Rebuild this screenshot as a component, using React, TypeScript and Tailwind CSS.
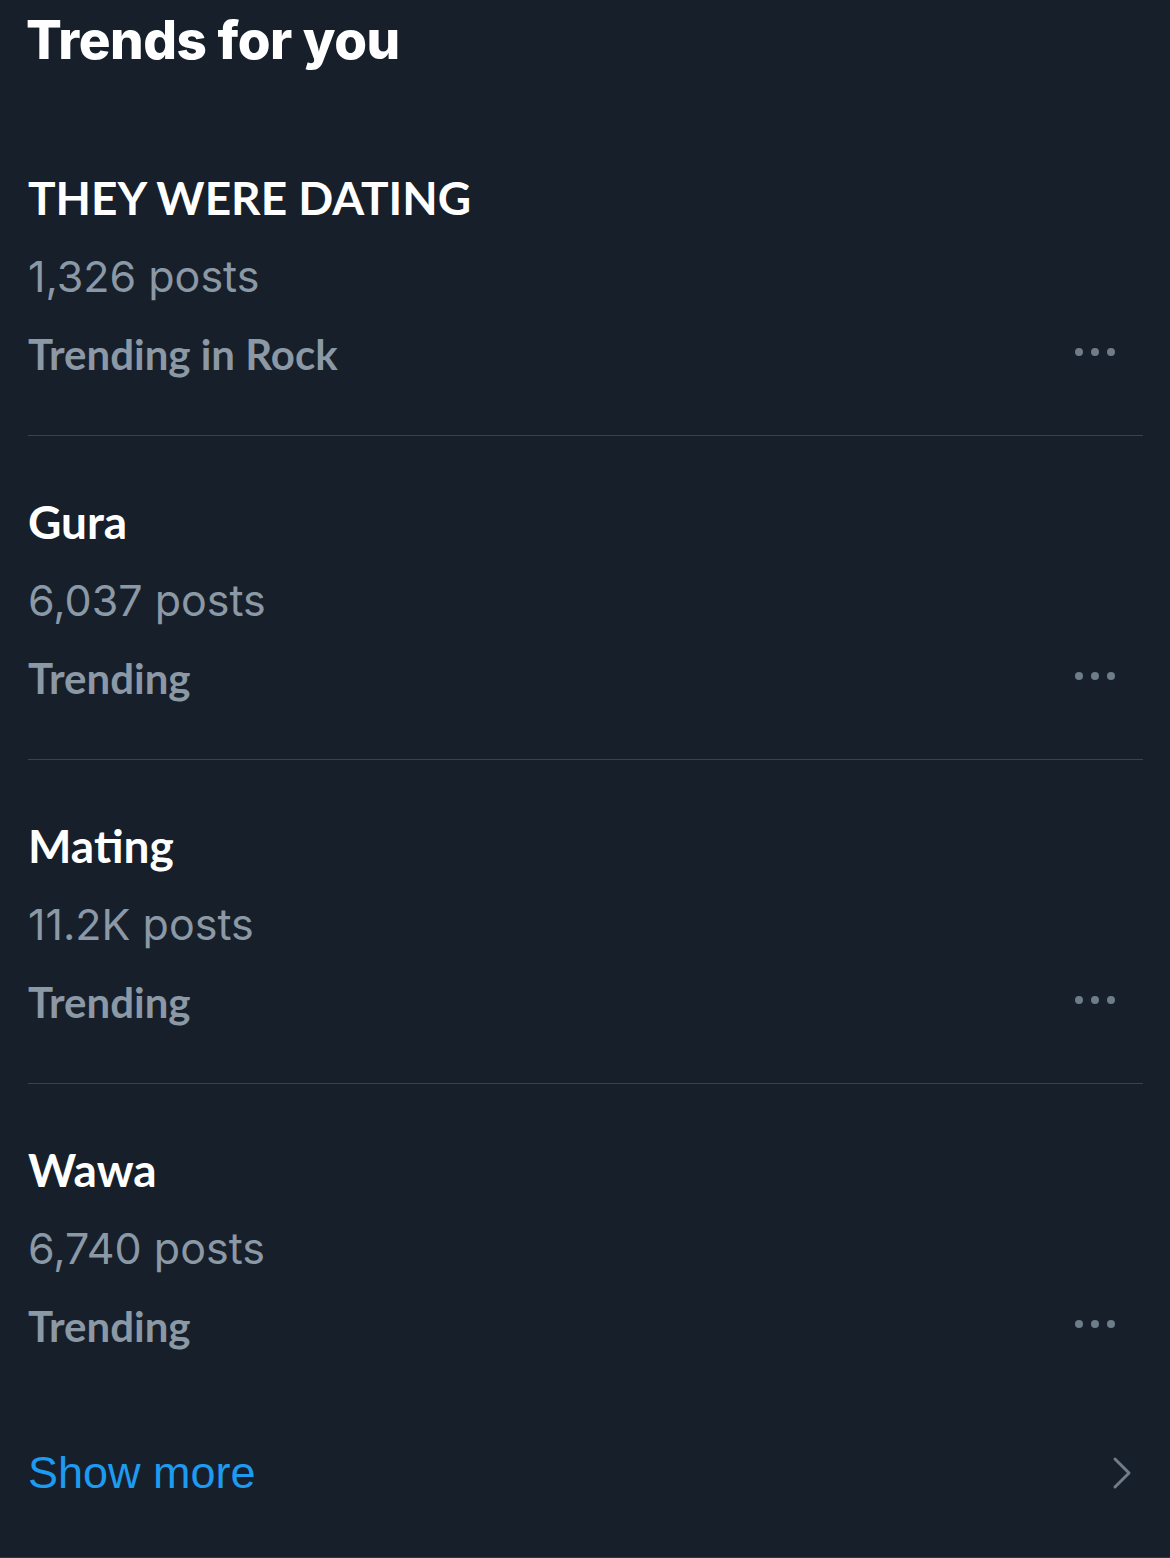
const trends = [
  { name: "THEY WERE DATING", posts: "1,326 posts", context: "Trending in Rock" },
  { name: "Gura", posts: "6,037 posts", context: "Trending" },
  { name: "Mating", posts: "11.2K posts", context: "Trending" },
  { name: "Wawa", posts: "6,740 posts", context: "Trending" },
];

const lato = { fontFamily: '"Lato", "Noto Sans", sans-serif' };
const inter = { fontFamily: '"Inter", "Noto Sans", sans-serif' };

function MoreDots() {
  return (
    <div className="mr-[28px] flex items-center gap-[7.5px] pb-[4px]">
      <span className="h-[8.5px] w-[8.5px] rounded-full bg-[#6f7c89]" />
      <span className="h-[8.5px] w-[8.5px] rounded-full bg-[#6f7c89]" />
      <span className="h-[8.5px] w-[8.5px] rounded-full bg-[#6f7c89]" />
    </div>
  );
}

function TrendRow({
  name,
  posts,
  context,
  last,
}: {
  name: string;
  posts: string;
  context: string;
  last: boolean;
}) {
  return (
    <div className={last ? "pt-[60px]" : "border-b border-[#38444d] pt-[60px] pb-[56px]"}>
      <div className="text-[46px] font-bold leading-[52px] text-white" style={lato}>
        {name}
      </div>
      <div className="mt-[26px] text-[43px] font-normal leading-[52px] text-[#8b98a5]" style={inter}>
        {posts}
      </div>
      <div className="mt-[27px] flex items-center justify-between">
        <span className="text-[42px] font-bold leading-[50px] text-[#8b98a5]" style={lato}>
          {context}
        </span>
        <MoreDots />
      </div>
    </div>
  );
}

export default function App() {
  return (
    <div className="min-h-[1558px] w-[1170px] border-b border-[#2f3a44] bg-[#171f2a] pl-[28px] pr-[27px]">
      <h1
        className="-ml-[2px] pt-[8px] text-[53px] font-extrabold leading-[64px] tracking-[-0.5px] text-white"
        style={inter}
      >
        Trends for you
      </h1>
      <div className="mt-[40px]">
        {trends.map((t, i) => (
          <TrendRow key={t.name} {...t} last={i === trends.length - 1} />
        ))}
      </div>
      <div className="mt-[96px] flex items-center justify-between">
        <span
          className="text-[45px] leading-[52px] text-[#1d9bf0]"
          style={{ fontFamily: '"Liberation Sans", Arial, sans-serif' }}
        >
          Show more
        </span>
        <svg
          width="22"
          height="34"
          viewBox="0 0 22 34"
          fill="none"
          className="mr-[9px]"
        >
          <path d="M3 3 L17 17 L3 31" stroke="#6f7c89" strokeWidth="3" strokeLinecap="round" strokeLinejoin="round" />
        </svg>
      </div>
    </div>
  );
}
